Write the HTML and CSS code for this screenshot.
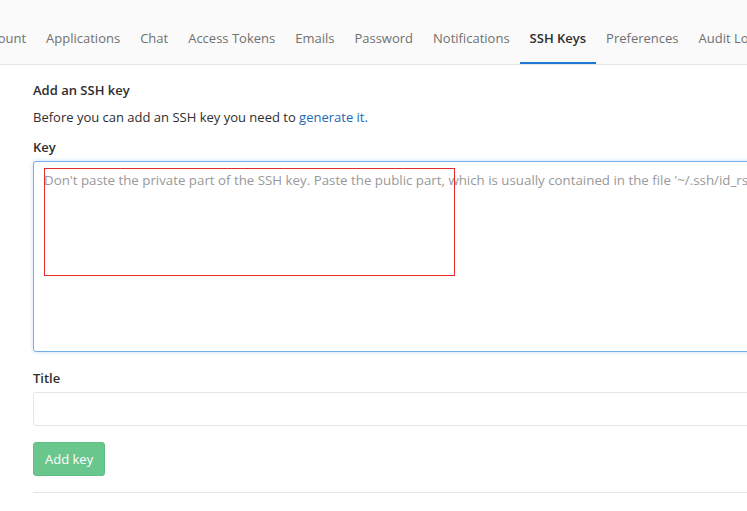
FILE: index.html
```html
<!DOCTYPE html>
<html lang="en">
<head>
<meta charset="utf-8">
<title>SSH Keys</title>
<link rel="stylesheet" href="styles.css">
</head>
<body>
  <nav class="tabs">
    <ul class="tab-list">
      <li class="tab"><a href="#">Account</a></li>
      <li class="tab"><a href="#">Applications</a></li>
      <li class="tab"><a href="#">Chat</a></li>
      <li class="tab"><a href="#">Access Tokens</a></li>
      <li class="tab"><a href="#">Emails</a></li>
      <li class="tab"><a href="#">Password</a></li>
      <li class="tab"><a href="#">Notifications</a></li>
      <li class="tab active"><a href="#">SSH Keys</a></li>
      <li class="tab"><a href="#">Preferences</a></li>
      <li class="tab"><a href="#">Audit Log</a></li>
    </ul>
  </nav>

  <main class="content">
    <h4 class="section-title">Add an SSH key</h4>
    <p class="intro">Before you can add an SSH key you need to <a href="#" class="link">generate it.</a></p>

    <form class="key-form">
      <div class="field field-key">
        <label class="label" for="key">Key</label>
        <div class="textarea-wrap">
          <textarea id="key" class="input textarea focused" placeholder="Don't paste the private part of the SSH key. Paste the public part, which is usually contained in the file '~/.ssh/id_rsa.pub' and begins with 'ssh-rsa'."></textarea>
          <span class="highlight-box"></span>
        </div>
      </div>
      <div class="field">
        <label class="label" for="title">Title</label>
        <input id="title" class="input text-input" type="text">
      </div>
      <div class="actions">
        <button type="button" class="btn-create">Add key</button>
      </div>
    </form>
  </main>
</body>
</html>
```
FILE: styles.css
```css
html, body {
  margin: 0;
  padding: 0;
  background: #fff;
  overflow: hidden;
}

body {
  font-family: "Open Sans", "Noto Sans", sans-serif;
  font-size: 13px;
  color: #2e2e2e;
  width: 747px;
  height: 511px;
}

/* top navigation tabs */
.tabs {
  background: #fafafa;
  border-bottom: 1px solid #e5e5e5;
  height: 64px;
  overflow: hidden;
}

.tab-list {
  list-style: none;
  margin: 0 0 0 -33px;
  padding: 0;
  display: flex;
  height: 64px;
  white-space: nowrap;
}

.tab a {
  display: block;
  height: 62px;
  padding: 0 10px;
  line-height: 76px;
  color: #707070;
  text-decoration: none;
  border-bottom: 2px solid transparent;
  box-sizing: content-box;
}

.tab.active a {
  color: #2e2e2e;
  font-weight: 600;
  border-bottom-color: #1f78d1;
}

/* page body */
.content {
  padding: 0 0 0 33px;
  width: 1100px;
}

.section-title {
  margin: 16px 0 0;
  font-size: 13px;
  font-weight: 600;
  line-height: 18px;
}

.intro {
  margin: 9px 0 0;
  line-height: 18px;
}

.link {
  color: #1b69b6;
  text-decoration: none;
}

.key-form {
  margin-top: 12px;
}

.field {
  margin-bottom: 16px;
}

.field-key {
  margin-bottom: 17px;
}

.label {
  display: block;
  font-weight: 600;
  line-height: 18px;
  margin-bottom: 5px;
}

.input {
  display: block;
  box-sizing: border-box;
  width: 1000px;
  font-family: inherit;
  font-size: 13px;
  color: #2e2e2e;
  background: #fff;
  border: 1px solid #e5e5e5;
  border-radius: 3px;
  outline: none;
}

.textarea-wrap {
  position: relative;
}

.textarea {
  height: 191px;
  resize: none;
  padding: 9px 10px;
  font-size: 13.3px;
  line-height: 18px;
}

.textarea::placeholder {
  color: #999;
}

.textarea.focused {
  border-color: #73afea;
  box-shadow: 0 0 4px rgba(115, 175, 234, 0.4);
}

/* annotation frame drawn over the textarea */
.highlight-box {
  position: absolute;
  left: 11px;
  top: 7px;
  width: 409px;
  height: 106px;
  border: 1px solid #e52c2c;
  pointer-events: none;
}

.text-input {
  height: 34px;
  padding: 6px 10px;
}

.actions {
  padding-bottom: 16px;
  border-bottom: 1px solid #e5e5e5;
  width: 1000px;
}

.btn-create {
  display: block;
  height: 34px;
  padding: 0 11px;
  font-family: inherit;
  font-size: 13px;
  color: #fff;
  background: #69c68d;
  border: 1px solid #5fbe84;
  border-radius: 3px;
  cursor: pointer;
}
```
